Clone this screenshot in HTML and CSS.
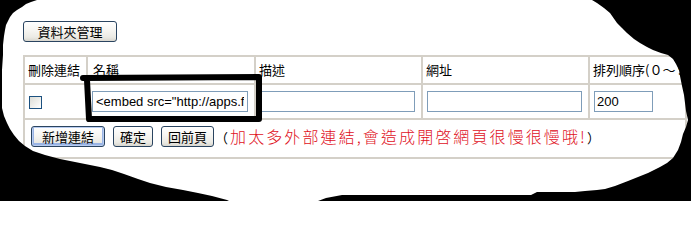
FILE: index.html
```html
<!DOCTYPE html>
<html lang="zh-Hant">
<head>
<meta charset="utf-8">
<title>連結管理</title>
<link rel="stylesheet" href="styles.css">
</head>
<body>
<div class="page">
  <div class="toolbar">
    <button class="btn folder" type="button">資料夾管理</button>
  </div>
  <table class="links">
    <colgroup>
      <col class="c-del">
      <col class="c-name">
      <col class="c-desc">
      <col class="c-url">
      <col class="c-sort">
    </colgroup>
    <tr class="head">
      <th>刪除連結</th>
      <th class="th-name">名稱</th>
      <th>描述</th>
      <th>網址</th>
      <th>排列順序(０～９９９)</th>
    </tr>
    <tr class="data">
      <td class="td-check"><input class="check" type="checkbox"></td>
      <td class="td-name"><input class="field f-name" type="text" value='&lt;embed src="http://apps.facebook.com/app" width="100%"&gt;'></td>
      <td><input class="field f-desc" type="text" value=""></td>
      <td><input class="field f-url" type="text" value=""></td>
      <td><input class="field f-sort" type="text" value="200"></td>
    </tr>
    <tr class="actions">
      <td colspan="5">
        <div class="action-bar">
          <button class="btn primary" type="button">新增連結</button>
          <button class="btn" type="button">確定</button>
          <button class="btn" type="button">回前頁</button>
          <span class="note">（<span class="warn">加太多外部連結,會造成開啓網頁很慢很慢哦!</span>）</span>
        </div>
      </td>
    </tr>
  </table>
</div>

<svg class="mark" width="691" height="201" viewBox="0 0 691 201" aria-hidden="true">
  <path d="M83,78 L259,77 L259,119 L89,119 L87,80" fill="none" stroke="#000" stroke-width="6" stroke-linejoin="round" stroke-linecap="round"/>
</svg>

<div class="tear tear-left"></div>
<div class="tear tear-right"></div>
</body>
</html>
```

FILE: styles.css
```css
html, body {
  margin: 0;
  padding: 0;
  background: #ffffff;
  overflow: hidden;
}

html {
  height: 201px;
}

body {
  width: 691px;
  height: 201px;
  position: relative;
  font-family: "Noto Sans CJK TC", "Liberation Sans", sans-serif;
  font-size: 13px;
  line-height: 16px;
  color: #000;
}

.page {
  padding: 21px 0 0 23px;
}

.toolbar {
  height: 21px;
  margin-bottom: 13px;
}

.btn {
  box-sizing: border-box;
  height: 21px;
  padding: 0 6px;
  margin: 0;
  font-family: "Noto Sans CJK TC", "Liberation Sans", sans-serif;
  font-size: 13px;
  line-height: 17px;
  color: #000;
  border: 1px solid #2a4460;
  border-radius: 3px;
  background: linear-gradient(#ffffff 0%, #f6f5f1 45%, #ebeae4 80%, #d8d6ce 100%);
  vertical-align: top;
}

.folder {
  width: 94px;
}

.primary {
  width: 74px;
  box-shadow: inset 0 0 0 1px #b8ccf0, inset 0 -1px 0 2px #9ab4e4;
}

.links {
  table-layout: fixed;
  border-collapse: separate;
  border-spacing: 0;
  width: 664px;
  border-top: 2px solid #d4d0c8;
  border-left: 2px solid #d4d0c8;
}

.c-del { width: 63px; }
.c-name { width: 168px; }
.c-desc { width: 167px; }
.c-url { width: 167px; }
.c-sort { width: 97px; }

.links th,
.links td {
  border-right: 2px solid #d4d0c8;
  border-bottom: 2px solid #d4d0c8;
  padding: 0 0 0 4px;
  text-align: left;
  vertical-align: middle;
  white-space: nowrap;
  overflow: hidden;
}

.links th {
  font-weight: normal;
  height: 26px;
  padding-left: 3px;
}

.links th.th-name {
  padding-left: 5px;
}

.data td {
  height: 33px;
}

.td-check {
  padding-left: 8px;
}

.td-name {
  padding-left: 5px;
}

.check {
  appearance: none;
  -webkit-appearance: none;
  display: block;
  width: 13px;
  height: 13px;
  margin: 1px 0 0 0;
  border: 1px solid #1c5180;
  box-sizing: border-box;
  background: linear-gradient(135deg, #dcdcd6 0%, #eeeeea 50%, #ffffff 100%);
}

.field {
  display: block;
  box-sizing: border-box;
  height: 21px;
  margin: 0;
  padding: 1px 3px;
  border: 1px solid #7f9db9;
  background: #fff;
  font-family: "Liberation Sans", Arial, sans-serif;
  font-size: 13px;
  color: #000;
}

.f-name { width: 156px; }
.f-desc { width: 155px; }
.f-url { width: 155px; }
.f-sort { width: 59px; padding-left: 2px; }

.actions td {
  height: 37px;
  padding-left: 6px;
}

.action-bar {
  display: flex;
  align-items: flex-end;
  gap: 8px;
  margin-top: -4px;
}

.note {
  margin-left: -7px;
  font-size: 13px;
  line-height: 18px;
  white-space: nowrap;
}

.warn {
  color: #e0101c;
  font-size: 16px;
  font-weight: 300;
  letter-spacing: 2.1px;
  margin-left: 2px;
}

.mark {
  position: absolute;
  left: 0;
  top: 0;
  pointer-events: none;
}

.tear {
  position: absolute;
  left: 0;
  top: 0;
  width: 691px;
  height: 201px;
  background: #000;
  pointer-events: none;
}

.tear-left {
  clip-path: polygon(0px 0px, 37px 0px, 31px 2px, 26px 4px, 22px 7px, 17px 10px, 13px 13px, 10px 17px, 8px 21px, 6px 25px, 5px 30px, 4px 36px, 3px 45px, 3px 55px, 2px 70px, 2px 90px, 2px 108px, 4px 116px, 7px 123px, 10px 129px, 14px 135px, 19px 141px, 25px 146px, 33px 151px, 45px 155px, 60px 159px, 80px 163px, 100px 167px, 112px 170px, 124px 174px, 138px 179px, 150px 183px, 166px 187px, 183px 190px, 198px 193px, 212px 196px, 227px 200px, 229px 201px, 0px 201px);
}

.tear-right {
  clip-path: polygon(592px 0px, 597px 3px, 604px 8px, 610px 13px, 617px 23px, 622px 28px, 627px 33px, 634px 39px, 640px 43px, 647px 47px, 653px 50px, 661px 53px, 668px 55px, 673px 59px, 676px 64px, 679px 70px, 680px 76px, 682px 86px, 684px 95px, 685px 103px, 686px 111px, 688px 120px, 686px 127px, 683px 134px, 681px 142px, 678px 150px, 673px 158px, 667px 163px, 660px 167px, 648px 173px, 638px 177px, 628px 181px, 615px 186px, 605px 189px, 597px 190px, 585px 191px, 575px 192px, 537px 192px, 531px 195px, 342px 195px, 326px 198px, 318px 201px, 691px 201px, 691px 0px);
}
```
